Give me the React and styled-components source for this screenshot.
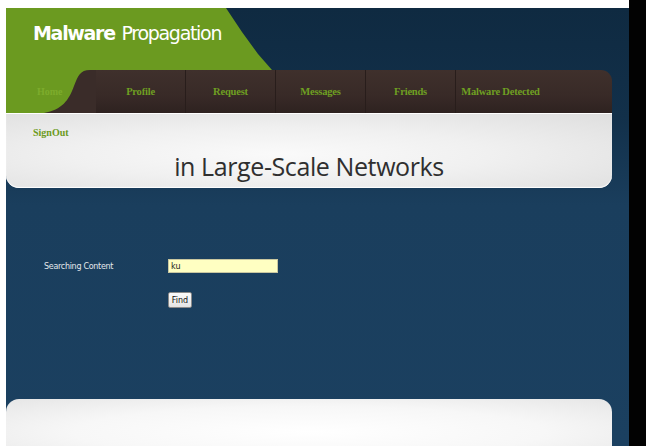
import styled, { createGlobalStyle } from 'styled-components'

const GlobalStyle = createGlobalStyle`
  html, body {
    margin: 0;
    padding: 0;
    background: #ffffff;
    overflow: hidden;
  }
`

const Screen = styled.div`
  display: flex;
  align-items: flex-start;
  width: 646px;
  height: 446px;
  background: #ffffff;
`

const Site = styled.div`
  width: 623px;
  padding: 8px 0 0 6px;
`

const SideShade = styled.div`
  width: 17px;
  height: 446px;
  background: #020202;
`

const Frame = styled.div`
  display: flex;
  flex-direction: column;
  width: 623px;
  height: 438px;
  background: linear-gradient(180deg, #0f2a41 0%, #12304a 25%, #1a3e5d 45%, #1b4060 100%);
  overflow: hidden;
`

const Header = styled.div`
  display: flex;
  height: 62px;
`

const Brand = styled.div`
  width: 266px;
  height: 62px;
  box-sizing: border-box;
  padding: 14px 0 0 27px;
  background: #6b9a20;
  clip-path: polygon(0 0, 220px 0, 236px 24px, 252px 46px, 266px 62px, 0 62px);
  font-family: 'DejaVu Sans', Verdana, sans-serif;
  font-size: 19px;
  letter-spacing: -1.3px;
  color: #ffffff;
  b {
    font-weight: bold;
    margin-right: 2px;
  }
`

const NavBar = styled.div`
  display: flex;
  width: 606px;
  height: 43px;
`

const HomeTab = styled.div`
  position: relative;
  width: 90px;
  display: flex;
  align-items: center;
  padding-left: 31px;
  box-sizing: border-box;
  background: #6b9a20;
  font-family: Georgia, 'Liberation Serif', serif;
  font-weight: bold;
  font-size: 10px;
  color: #7dac2c;
  svg {
    position: absolute;
    right: 0;
    top: 0;
  }
  span {
    position: relative;
    z-index: 1;
  }
`

const Menu = styled.div`
  flex: 1;
  display: flex;
  background: linear-gradient(180deg, #3f302c 0%, #382a27 60%, #2e2220 100%);
  border-top-right-radius: 11px;
`

const MenuItem = styled.div`
  width: 89px;
  display: flex;
  align-items: center;
  justify-content: center;
  border-left: ${(p) => (p.first ? 'none' : '1px solid #281d1b')};
  font-family: Georgia, 'Liberation Serif', serif;
  font-weight: bold;
  font-size: 10.5px;
  letter-spacing: -0.2px;
  color: #6f9f22;
`

const Banner = styled.div`
  width: 606px;
  height: 75px;
  box-sizing: border-box;
  padding: 14px 0 0 27px;
  background: radial-gradient(ellipse at 45% 55%, #fafafa 0%, #f0f0f0 45%, #dedede 100%);
  border-radius: 0 0 13px 13px;
  box-shadow: inset 0 1px 0 #ffffff, inset 0 -1px 1px #ffffff;
`

const SignOut = styled.div`
  font-family: Georgia, 'Liberation Serif', serif;
  font-weight: bold;
  font-size: 10px;
  color: #6b9a20;
`

const Slogan = styled.div`
  margin-top: 11px;
  padding-right: 27px;
  text-align: center;
  font-family: 'Open Sans', sans-serif;
  font-size: 25px;
  letter-spacing: -0.4px;
  color: #2f2f2f;
`

const Content = styled.div`
  flex: 1;
  display: flex;
  flex-direction: column;
  gap: 19px;
  padding: 71px 0 0 38px;
`

const FormRow = styled.div`
  display: flex;
  align-items: center;
`

const Label = styled.div`
  width: 124px;
  font-family: 'DejaVu Sans', Tahoma, sans-serif;
  font-size: 8px;
  letter-spacing: -0.3px;
  color: #e4e8ec;
`

const SearchInput = styled.input`
  width: 110px;
  height: 14px;
  box-sizing: border-box;
  margin: 0;
  padding: 0 2px;
  border: 1px solid #c9c7a0;
  background: #ffffc2;
  font-family: 'DejaVu Sans', Tahoma, sans-serif;
  font-size: 8px;
  color: #222;
  outline: none;
`

const FindButton = styled.button`
  margin-left: 124px;
  width: 24px;
  height: 16px;
  padding: 0;
  border: 1px solid #8a8a8a;
  border-radius: 2px;
  background: linear-gradient(180deg, #fbfbfb 0%, #e4e4e4 100%);
  font-family: 'DejaVu Sans', Tahoma, sans-serif;
  font-size: 8px;
  color: #111;
`

const Footer = styled.div`
  width: 606px;
  height: 47px;
  margin-top: auto;
  background: radial-gradient(ellipse at 50% 70%, #ffffff 0%, #f7f7f7 55%, #e6e6e6 100%);
  border-radius: 13px 13px 0 0;
`

const tabs = ['Profile', 'Request', 'Messages', 'Friends', 'Malware Detected']

export default function App() {
  return (
    <>
      <GlobalStyle />
      <Screen>
        <Site>
          <Frame>
            <Header>
              <Brand>
                <b>Malware</b> Propagation
              </Brand>
            </Header>
            <NavBar>
              <HomeTab>
                <svg width="52" height="43" viewBox="0 0 52 43">
                  <path
                    d="M52 0 H46 C36 0 34 6 30 16 C25 30 18 40 0 43 H52 Z"
                    fill="#3a2c29"
                  />
                </svg>
                <span>Home</span>
              </HomeTab>
              <Menu>
                {tabs.map((t, i) => (
                  <MenuItem key={t} first={i === 0}>
                    {t}
                  </MenuItem>
                ))}
              </Menu>
            </NavBar>
            <Banner>
              <SignOut>SignOut</SignOut>
              <Slogan>in Large-Scale Networks</Slogan>
            </Banner>
            <Content>
              <FormRow>
                <Label>Searching Content</Label>
                <SearchInput defaultValue="ku" />
              </FormRow>
              <FormRow>
                <FindButton>Find</FindButton>
              </FormRow>
            </Content>
            <Footer />
          </Frame>
        </Site>
        <SideShade />
      </Screen>
    </>
  )
}
